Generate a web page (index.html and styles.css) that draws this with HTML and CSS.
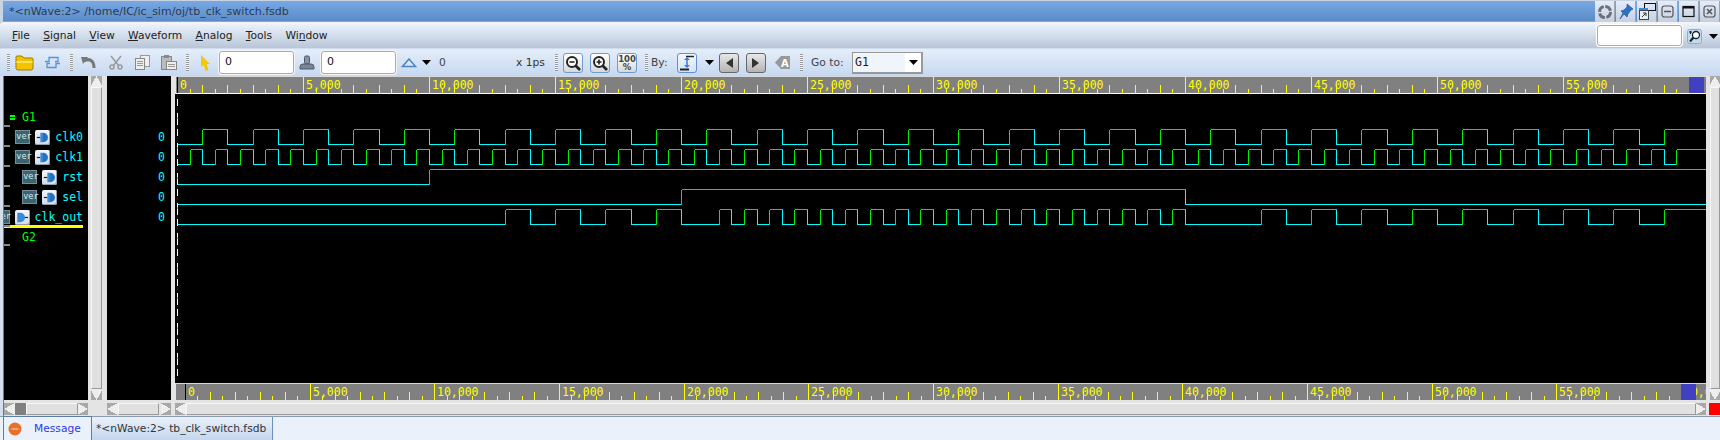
FILE: index.html
```html
<!DOCTYPE html>
<html lang="en">
<head>
    <meta charset="UTF-8">
    <title>nWave</title>
    <link rel="stylesheet" href="styles.css">
</head>
<body>
<svg class="defs" width="0" height="0">
    <symbol id="gate-in" viewBox="0 0 15 15">
        <path d="M1 7.5h4" stroke="#223" stroke-width="1.4"/>
        <path d="M5 2h3.5a5.5 5.5 0 0 1 0 11H5z" fill="#3a8ad8"/>
        <path d="M8 2.5a5 5 0 0 1 0 10z" fill="#2670bc"/>
    </symbol>
    <symbol id="gate-out" viewBox="0 0 15 15">
        <path d="M10 7.5h4" stroke="#223" stroke-width="1.4"/>
        <path d="M1.5 2H5a5.5 5.5 0 0 1 0 11H1.5z" fill="#3a8ad8"/>
    </symbol>
    <symbol id="caret" viewBox="0 0 9 5">
        <path d="M0 0h9L4.5 5z" fill="#000"/>
    </symbol>
</svg>

<div class="titlebar">
    <span class="title-text">*&lt;nWave:2&gt; /home/IC/ic_sim/oj/tb_clk_switch.fsdb</span>
    <div class="win-buttons">
        <button class="win-btn"><svg width="16" height="16" viewBox="0 0 16 16"><circle cx="8" cy="8" r="5.5" fill="none" stroke="#6b7078" stroke-width="3" stroke-dasharray="7 1.5"/></svg></button>
        <button class="win-btn"><svg width="16" height="18" viewBox="0 0 16 18"><path d="M9 1l6 5-2 1-3 4-1 3-3-3-4 5 3-6-2-2 3-1 3-3z" fill="#2a72c8" stroke="#174a8c" stroke-width=".6"/></svg></button>
        <button class="win-btn"><svg width="18" height="18" viewBox="0 0 18 18"><rect x="6.5" y=".5" width="11" height="7" fill="none" stroke="#111"/><rect x="1.5" y="7.5" width="9" height="9" fill="#e8eef6" stroke="#444"/><path d="M1 6h9" stroke="#3a8ad8" stroke-width="2"/><path d="M4 14l4-4m-3 0h3v3" stroke="#333" fill="none"/></svg></button>
        <button class="win-btn"><svg width="13" height="13" viewBox="0 0 13 13"><rect x="1" y="1" width="11" height="11" rx="2.5" fill="none" stroke="#555" stroke-width="1.2"/><path d="M3 6.5h7" stroke="#555" stroke-width="1.5"/></svg></button>
        <button class="win-btn"><svg width="13" height="13" viewBox="0 0 13 13"><rect x="1" y="1.5" width="11" height="10" fill="none" stroke="#111" stroke-width="1.2"/><path d="M1 2.5h11" stroke="#111" stroke-width="2"/></svg></button>
        <button class="win-btn"><svg width="13" height="13" viewBox="0 0 13 13"><rect x="1" y="1" width="11" height="11" rx="2.5" fill="none" stroke="#555" stroke-width="1.2"/><path d="M4 4l5 5m0-5l-5 5" stroke="#555" stroke-width="1.6"/></svg></button>
    </div>
</div>

<div class="menubar">
    <div class="menu">
        <span><u>F</u>ile</span>
        <span><u>S</u>ignal</span>
        <span><u>V</u>iew</span>
        <span><u>W</u>aveform</span>
        <span><u>A</u>nalog</span>
        <span><u>T</u>ools</span>
        <span>Wi<u>n</u>dow</span>
    </div>
    <div class="menu-search">
        <div class="search-box"></div>
        <svg class="search-icon" width="15" height="15" viewBox="0 0 15 15"><rect x=".5" y=".5" width="14" height="14" rx="2" fill="#c4d8ee" stroke="#9ab"/><circle cx="9" cy="6" r="3.5" fill="#fff" stroke="#123" stroke-width="1.3"/><path d="M6.5 8.5L3 12.5" stroke="#123" stroke-width="2"/><path d="M2 3h3M3.5 2v3" stroke="#123"/></svg>
        <svg class="search-caret" width="9" height="5"><use href="#caret"/></svg>
    </div>
</div>

<div class="toolbar">
    <i class="grip ml-7"></i>
    <svg class="ml-5" width="19" height="17" viewBox="0 0 19 17"><path d="M1 3a1 1 0 0 1 1-1h5l2 2h8a1 1 0 0 1 1 1v9a2 2 0 0 1-2 2H3a2 2 0 0 1-2-2z" fill="#f2c400" stroke="#a07c00"/><path d="M1.5 7h16v2h-16z" fill="#ffe25c"/></svg>
    <svg class="ml-10" width="17" height="13" viewBox="0 0 17 13"><path d="M1 5.5h4V1.500h9v4h-3M16 7.5h-4v4H3v-4h3" fill="none" stroke="#5a92d0" stroke-width="1.3"/></svg>
    <i class="grip ml-9"></i>
    <svg class="ml-8" width="15" height="14" viewBox="0 0 15 14"><path d="M3 5c5-3 10-1 10 7" fill="none" stroke="#777" stroke-width="3"/><path d="M0 1l7 0-5 7z" fill="#777"/></svg>
    <svg class="ml-13" width="14" height="15" viewBox="0 0 14 15"><path d="M2 1l8 10M12 1L4 11" stroke="#999" stroke-width="1.5"/><circle cx="3" cy="12" r="2" fill="none" stroke="#999" stroke-width="1.5"/><circle cx="11" cy="12" r="2" fill="none" stroke="#999" stroke-width="1.5"/></svg>
    <svg class="ml-12" width="15" height="15" viewBox="0 0 15 15"><rect x="5.5" y=".5" width="9" height="11" fill="#eee" stroke="#999"/><rect x=".5" y="3.5" width="9" height="11" fill="#eee" stroke="#888"/><path d="M2 6.5h6M2 8.5h6M2 10.5h6" stroke="#999"/></svg>
    <svg class="ml-11" width="16" height="15" viewBox="0 0 16 15"><rect x=".5" y="1.5" width="10" height="13" fill="#bbb" stroke="#888"/><rect x="3" y="0" width="5" height="3" fill="#888"/><rect x="5.5" y="6.5" width="10" height="8" fill="#eee" stroke="#888"/><path d="M7 9.500h7M7 11.500h7" stroke="#999"/></svg>
    <i class="grip ml-9"></i>
    <svg class="ml-12" width="9" height="16" viewBox="0 0 9 16"><path d="M0 0l9 9H5.5l2 6-3 1-2-6L0 12z" fill="#f4c800"/></svg>
    <div class="field ml-9">0</div>
    <svg class="ml-5" width="16" height="17" viewBox="0 0 16 17"><rect x="5.5" y="2" width="5" height="8" rx="1.5" fill="#8494a6" stroke="#556"/><path d="M1 13a3 3 0 0 1 3-3h8a3 3 0 0 1 3 3v2H1z" fill="#76879a" stroke="#556"/></svg>
    <div class="field ml-6">0</div>
    <svg class="ml-5" width="16" height="10" viewBox="0 0 16 10"><path d="M8 1l6.500 7.500h-13z" fill="#d8e6f6" stroke="#4a86c8" stroke-width="1.5"/></svg>
    <svg class="ml-5" width="9" height="5"><use href="#caret"/></svg>
    <span class="tb-text tb-zero">0</span>
    <span class="tb-text tb-scale">x 1ps</span>
    <i class="grip ml-10"></i>
    <button class="tool-btn ml-5"><svg width="16" height="16" viewBox="0 0 16 16"><circle cx="7" cy="7" r="5" fill="#fff" stroke="#222" stroke-width="2"/><path d="M4.5 7h5" stroke="#222" stroke-width="1.6"/><path d="M10.5 10.5L15 15" stroke="#222" stroke-width="2.6"/></svg></button>
    <button class="tool-btn ml-7"><svg width="16" height="16" viewBox="0 0 16 16"><circle cx="7" cy="7" r="5" fill="#fff" stroke="#222" stroke-width="2"/><path d="M4.5 7h5M7 4.5v5" stroke="#222" stroke-width="1.6"/><path d="M10.5 10.5L15 15" stroke="#222" stroke-width="2.6"/></svg></button>
    <button class="tool-btn hundred ml-7">100<br>%</button>
    <i class="grip ml-8"></i>
    <span class="tb-text tb-by">By:</span>
    <button class="tool-btn by-btn ml-10"><svg width="18" height="18" viewBox="0 0 18 18"><path d="M8 2.5h8" stroke="#222" stroke-width="1.5"/><path d="M2 15.5h9" stroke="#222" stroke-width="2"/><path d="M9 4v9" stroke="#3a7ae0" stroke-width="1.5"/><path d="M6 6l3-3 3 3zM6 11l3 3 3-3z" fill="#3a7ae0"/></svg></button>
    <svg class="ml-8" width="9" height="5"><use href="#caret"/></svg>
    <button class="tool-btn nav-btn ml-5"><svg width="10" height="12" viewBox="0 0 10 12"><path d="M9 1v10L2 6z" fill="#333"/></svg></button>
    <button class="tool-btn nav-btn ml-7"><svg width="10" height="12" viewBox="0 0 10 12"><path d="M1 1v10l7-5z" fill="#333"/></svg></button>
    <svg class="ml-9" width="15" height="15" viewBox="0 0 15 15"><path d="M0 7.5L6 1h9v13H6z" fill="#999"/><text class="tag-text" x="6" y="11.5">A</text></svg>
    <i class="grip ml-10"></i>
    <span class="tb-text tb-goto">Go to:</span>
    <div class="select ml-8"><span class="select-value">G1</span><span class="select-btn"><svg width="9" height="5"><use href="#caret"/></svg></span></div>
</div>

<div class="main">
    <div class="pane names">
        <div class="row group"><b class="group-mark"></b>G1</div>
        <div class="row sig"><span class="ver">ver</span><span class="gate"><svg width="13" height="13"><use href="#gate-in"/></svg></span><span class="sig-name">clk0</span></div>
        <div class="row sig"><span class="ver">ver</span><span class="gate"><svg width="13" height="13"><use href="#gate-in"/></svg></span><span class="sig-name">clk1</span></div>
        <div class="row sig"><span class="ver">ver</span><span class="gate"><svg width="13" height="13"><use href="#gate-in"/></svg></span><span class="sig-name">rst</span></div>
        <div class="row sig"><span class="ver">ver</span><span class="gate"><svg width="13" height="13"><use href="#gate-in"/></svg></span><span class="sig-name">sel</span></div>
        <div class="row sig selected"><span class="ver">ver</span><span class="gate"><svg width="13" height="13"><use href="#gate-out"/></svg></span><span class="sig-name">clk_out</span></div>
        <div class="row group last-group">G2</div>
    </div>
    <div class="vscroll-slot">
        <div class="vscroll"><i class="arrow up"></i><i class="thumb"></i><i class="arrow down"></i></div>
    </div>
    <div class="pane values">
        <div class="value">0</div>
        <div class="value">0</div>
        <div class="value">0</div>
        <div class="value">0</div>
        <div class="value">0</div>
    </div>
    <div class="wave-col">
        <div class="ruler ruler-top"><svg id="rulerTop" width="1530" height="16"></svg></div>
        <svg id="waves" class="waves" width="1531" height="289"></svg>
        <div class="ruler ruler-bottom"><svg id="rulerBottom" width="1530" height="16"></svg></div>
    </div>
    <div class="vscroll right"><i class="arrow up"></i><i class="thumb"></i><i class="arrow down"></i></div>

    <div class="hscroll hs-names"><i class="arrow left"></i><i class="track"></i><i class="thumb"></i><i class="arrow right"></i></div>
    <div></div>
    <div class="hscroll hs-values"><i class="arrow left"></i><i class="thumb"></i><i class="arrow right"></i></div>
    <div class="hscroll hs-wave"><i class="arrow left"></i><i class="thumb"></i><i class="arrow right"></i></div>
    <div class="corner"></div>
</div>

<div class="tabs">
    <div class="tab tab-msg">
        <svg width="14" height="14" viewBox="0 0 14 14"><circle cx="7" cy="7" r="6.5" fill="#e8702a"/><path d="M3.5 7h7" stroke="#f6b48a" stroke-width="1.5"/></svg>
        <span>Message</span>
    </div>
    <div class="tab tab-wave">*&lt;nWave:2&gt; tb_clk_switch.fsdb</div>
</div>

<script src="script.js"></script>
</body>
</html>
```
FILE: styles.css
```css
* {
    box-sizing: border-box;
}
html, body {
    margin: 0;
    height: 440px;
    overflow: hidden;
}
body {
    width: 1720px;
    background-color: #e4e4e4;
    font-family: 'DejaVu Sans', sans-serif;
    font-size: 10.7px;
    color: #333;
}
.defs {
    position: absolute;
}
button {
    padding: 0;
    font: inherit;
}

/* title bar */
.titlebar {
    height: 24px;
    display: flex;
    align-items: stretch;
    justify-content: space-between;
    background: linear-gradient(#78a9e4, #5a8ac6);
    border-top: 1px solid #c8d2e0;
    border-left: 3px solid #c8d4e4;
    border-bottom: 2px solid #f4f4f4;
    box-shadow: inset 0 -1px 0 #9aa4b0;
}
.title-text {
    margin-left: 6px;
    font-size: 11px;
    line-height: 21px;
    color: #2c3a52;
}
.win-buttons {
    display: flex;
    gap: 1px;
    height: 21px;
}
.win-btn {
    width: 20px;
    height: 21px;
    display: flex;
    align-items: center;
    justify-content: center;
    background: linear-gradient(#e4ecf8, #c4d0e2);
    border: 1px solid #9aa6b6;
    border-width: 0 1px 0 0;
}

/* menu */
.menubar {
    height: 25px;
    display: flex;
    justify-content: space-between;
    background: linear-gradient(#ebf2fc, #b9c6d8);
    border-bottom: 1px solid #cfdcee;
}
.menu {
    display: flex;
    gap: 13.3px;
    padding-left: 12px;
    line-height: 24px;
    color: #222;
}
.menu-search {
    display: flex;
    align-items: center;
}
.search-box {
    width: 85px;
    height: 21px;
    margin-top: -1px;
    background-color: #fff;
    border: 1px solid #aaa;
    border-radius: 3px;
    box-shadow: 0 0 0 1px #fff;
}
.search-icon {
    margin-left: 5px;
}
.search-caret {
    margin: 0 2px 0 7px;
}

/* toolbar */
.toolbar {
    height: 27px;
    display: flex;
    align-items: center;
    background: linear-gradient(#e5eefa, #c6d8f0);
}
.grip {
    display: block;
    width: 3px;
    height: 17px;
    background: repeating-linear-gradient(#999 0 1px, #f4f4f4 1px 2px);
}
.ml-5 { margin-left: 5px; }
.ml-6 { margin-left: 6px; }
.ml-7 { margin-left: 7px; }
.ml-8 { margin-left: 8px; }
.ml-9 { margin-left: 9px; }
.ml-10 { margin-left: 10px; }
.ml-11 { margin-left: 11px; }
.ml-12 { margin-left: 12px; }
.ml-13 { margin-left: 13px; }
.field {
    width: 75px;
    height: 23px;
    padding-left: 5px;
    background-color: #fff;
    border: 1px solid #aaa;
    border-radius: 3px;
    box-shadow: 0 0 0 1px #f4f4f4;
    font-size: 11px;
    line-height: 20px;
    color: #111;
}
.tb-text {
    display: block;
    white-space: nowrap;
}
.tb-zero {
    width: 7px;
    margin-left: 8px;
    color: #444;
}
.tb-scale {
    width: 29px;
    margin-left: 70px;
}
.tb-by {
    width: 16px;
    margin-left: 3px;
    color: #444;
}
.tb-goto {
    width: 33px;
    margin-left: 8px;
    color: #444;
}
.tool-btn {
    width: 20px;
    height: 20px;
    display: flex;
    align-items: center;
    justify-content: center;
    background: linear-gradient(#fff, #d8d8d8);
    border: 1px solid #6d9bcf;
    border-radius: 3px;
}
.hundred {
    font-size: 8.5px;
    font-weight: bold;
    line-height: 8px;
    color: #444;
    text-align: center;
}
.by-btn {
    border-color: #5f8fd8;
    background: linear-gradient(#f4f8ff, #d4e2f6);
}
.nav-btn {
    border-color: #666;
    background: linear-gradient(#e8e8e8, #b4b4b4);
}
.tag-text {
    font-size: 10px;
    font-weight: bold;
    fill: #fff;
}
.select {
    width: 71px;
    height: 22px;
    display: flex;
    justify-content: space-between;
    background-color: #f0f5fc;
    border: 1px solid #999;
    border-width: 1px 2px 2px 1px;
}
.select-value {
    padding-left: 2px;
    font-family: 'DejaVu Sans Mono', monospace;
    font-size: 11.5px;
    line-height: 18px;
    color: #222;
}
.select-btn {
    width: 16px;
    display: flex;
    align-items: center;
    justify-content: center;
    background-color: #fff;
}

/* signal panes */
.main {
    display: grid;
    grid-template-columns: 84px 19px 64px 1538px 11px;
    grid-template-rows: 324px 16px;
    padding-left: 4px;
    box-shadow: inset 3px 0 0 #d4dfee, inset 4px 0 0 #777;
}
.pane {
    background-color: #000;
    overflow: hidden;
    font-family: 'DejaVu Sans Mono', monospace;
    font-size: 11.5px;
    color: #0ff;
}
.names {
    padding: 31px 5px 0 0;
}
.row {
    position: relative;
    height: 20px;
    display: flex;
    align-items: center;
    justify-content: flex-end;
    white-space: nowrap;
}
.sig::before, .last-group::before, .last-group::after {
    content: '';
    position: absolute;
    left: 0;
    top: -2px;
    width: 6px;
    height: 2px;
    background-color: #888;
}
.group {
    justify-content: flex-start;
    padding-left: 18px;
    color: #0f0;
}
.group-mark {
    display: block;
    width: 5px;
    height: 5px;
    margin: 0 7px 0 -12px;
    border-top: 2px solid #0f0;
    border-bottom: 2px solid #0f0;
}
.ver {
    flex: none;
    width: 15px;
    height: 14px;
    background-color: #3a6470;
    border: 1px solid #75909a;
    color: #dde8ec;
    font-size: 8.5px;
    line-height: 11px;
    text-align: center;
}
.gate {
    flex: none;
    width: 15px;
    height: 15px;
    margin-left: 5px;
    padding: 1px;
    background: linear-gradient(#f4f6fa, #d0dcec);
    border-radius: 2px;
    box-shadow: inset -1px -1px 0 #99a;
}
.gate svg {
    display: block;
}
.sig-name {
    margin-left: 5px;
}
.selected {
    height: 21px;
    padding-top: 2px;
    border-bottom: 3px solid #ff0;
}
.last-group {
    height: 18px;
}
.last-group::before {
    top: -3px;
}
.last-group::after {
    top: auto;
    bottom: 0;
}
.vscroll-slot {
    padding: 0 5px 0 3px;
}
.vscroll {
    height: 100%;
    display: flex;
    flex-direction: column;
    background-color: #e0e0e0;
}
.vscroll.right {
    width: 10px;
    margin-left: 1px;
}
.values {
    padding: 51px 6px 0 0;
}
.value {
    height: 20px;
    line-height: 20px;
    text-align: right;
}

/* wave area */
.wave-col {
    padding: 0 3px 0 4px;
}
.waves {
    display: block;
    background-color: #000;
}
.ruler {
    margin-left: 1px;
    background-color: #808080;
}
.ruler svg {
    display: block;
}
.ruler-top {
    height: 18px;
    border-top: 1px solid #d8d8d8;
    border-bottom: 1px solid #fff;
}
.ruler-bottom {
    height: 17px;
    border-top: 1px solid #d8d8d8;
}
.ruler-text {
    font-family: 'DejaVu Sans Mono', monospace;
    font-size: 11.5px;
    fill: #ff0;
}

/* scrollbars */
.thumb {
    display: block;
    flex: 1;
    background-color: #e0e0e0;
    border: 1px solid #f8f8f8;
    border-right-color: #999;
    border-bottom-color: #999;
}
.arrow {
    flex: none;
    display: block;
    background-color: #a8a8a8;
}
.arrow.up {
    height: 11px;
    background-image: conic-gradient(from 150deg at 50% 0, #eee 0 60deg, transparent 60deg);
}
.arrow.down {
    height: 11px;
    background-image: conic-gradient(from -30deg at 50% 100%, #eee 0 60deg, transparent 60deg);
}
.arrow.left {
    width: 11px;
    background-image: conic-gradient(from 60deg at 0 50%, #eee 0 60deg, transparent 60deg);
}
.arrow.right {
    width: 10px;
    background-image: conic-gradient(from 240deg at 100% 50%, #eee 0 60deg, transparent 60deg);
}
.hscroll {
    height: 12px;
    margin-top: 3px;
    display: flex;
}
.track {
    display: block;
    width: 11px;
    background-color: #808080;
}
.hs-values .thumb {
    margin-right: 2px;
}
.hs-wave {
    margin-left: 4px;
    margin-right: 3px;
}
.corner {
    height: 12px;
    margin-top: 3px;
    background-color: #f00;
}

/* tabs */
.tabs {
    height: 24px;
    display: flex;
    padding-left: 3px;
    background-color: #ebf1fa;
    border-top: 1px solid #8a9bb0;
}
.tab {
    display: flex;
    align-items: center;
    font-size: 10.7px;
    white-space: nowrap;
}
.tab-msg {
    width: 89px;
    padding-left: 4px;
    gap: 12px;
    border: 1px solid #5a7ea6;
    border-width: 0 1px;
    color: #2b3be8;
    box-shadow: 0 -1px 0 #5a7ea6;
}
.tab-wave {
    width: 181px;
    padding-left: 4px;
    background: linear-gradient(#eaf1fa, #c4d6ee);
    border-right: 1px solid #6a8fc0;
    color: #333;
}
```
FILE: script.js
```js
const SVG_NS = 'http://www.w3.org/2000/svg';

function add(parent, name, attrs) {
    const node = document.createElementNS(SVG_NS, name);
    for (const key in attrs) {
        node.setAttribute(key, attrs[key]);
    }
    parent.appendChild(node);
    return node;
}

function steps(from, to, step) {
    const list = [];
    for (let t = from; t <= to; t += step) {
        list.push(t);
    }
    return list;
}

// time ruler, x0 is where 0 sits inside the svg, labels stop at lastLabel
function drawRuler(svg, x0, scale, blueX, lastLabel) {
    for (let t = 0; t <= 60000; t += 500) {
        const x = Math.round(x0 + t * scale) + 0.5;
        let top = 12;
        if (t % 5000 === 0) {
            top = 0;
        } else if (t % 1000 === 0) {
            top = 8;
        }
        const color = t === 0 ? '#000' : '#ff0';
        add(svg, 'path', { d: `M${x} ${top}V16`, stroke: color, 'shape-rendering': 'crispEdges' });
        if (t % 5000 === 0 && t <= lastLabel) {
            const label = add(svg, 'text', { class: 'ruler-text', x: Math.round(x + 2), y: 12 });
            label.textContent = t.toLocaleString('en-US');
        }
    }
    add(svg, 'rect', { x: blueX, y: 0, width: 15, height: 16, fill: '#4040c0' });
}

// one trace, edges are the times where the level flips
function drawTrace(svg, hi, lo, edges) {
    const xOf = t => Math.round(2 + t * 0.0252) + 0.5;
    let green = '';
    let cyan = '';
    let level = 0;
    let x = 2.5;
    edges.concat([null]).forEach(t => {
        const next = t === null ? 1531 : xOf(t);
        if (level) {
            green += `M${x} ${hi + 0.5}H${next}`;
        } else {
            cyan += `M${x} ${lo + 0.5}H${next}`;
        }
        if (t !== null) {
            if (level) {
                cyan += `M${next} ${hi + 0.5}V${lo + 0.5}`;
            } else {
                green += `M${next} ${lo + 0.5}V${hi + 0.5}`;
            }
        }
        level = 1 - level;
        x = next;
    });
    add(svg, 'path', { d: cyan, stroke: '#0ff', fill: 'none', 'shape-rendering': 'crispEdges' });
    add(svg, 'path', { d: green, stroke: '#0e0', fill: 'none', 'shape-rendering': 'crispEdges' });
}

function drawCursor(svg) {
    const dashes = [['#00c', 4], ['#fff', 7], ['#000', 1], ['#00c', 3], ['#000', 3], ['#fff', 4], ['#cc0', 2], ['#fff', 6]];
    let y = 1;
    while (y < 289) {
        dashes.forEach(([color, len]) => {
            add(svg, 'rect', { x: 2, y: y, width: 1, height: len, fill: color });
            y += len;
        });
    }
}

const waves = document.getElementById('waves');
drawCursor(waves);
drawTrace(waves, 35, 50, steps(1000, 59000, 1000));
drawTrace(waves, 55, 70, steps(500, 59500, 500));
drawTrace(waves, 75, 90, [10000]);
drawTrace(waves, 95, 110, [20000, 40000]);
drawTrace(waves, 115, 130, steps(13000, 20000, 1000).concat(steps(21500, 40000, 500), steps(43000, 59000, 1000)));

drawRuler(document.getElementById('rulerTop'), 1, 0.0252, 1513, 55000);
drawRuler(document.getElementById('rulerBottom'), 9, 0.024933, 1505, 60000);
```
